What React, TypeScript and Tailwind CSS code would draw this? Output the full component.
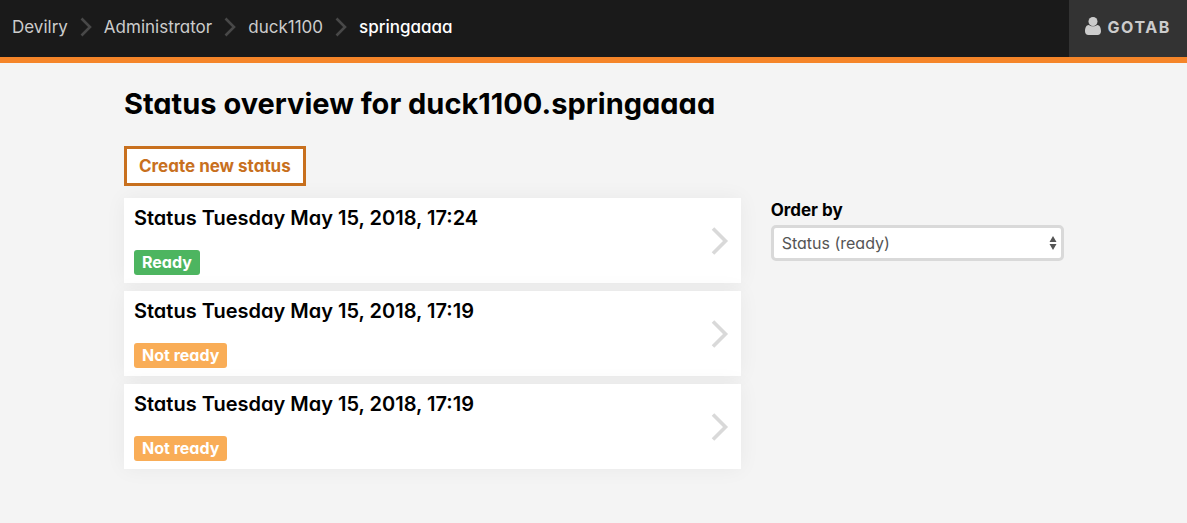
import React from "react";

type Status = { title: string; ready: boolean };

const crumbs = ["Devilry", "Administrator", "duck1100"];

const statuses: Status[] = [
  { title: "Status Tuesday May 15, 2018, 17:24", ready: true },
  { title: "Status Tuesday May 15, 2018, 17:19", ready: false },
  { title: "Status Tuesday May 15, 2018, 17:19", ready: false },
];

function CrumbSeparator() {
  return (
    <svg width="12" height="20" viewBox="0 0 12 20" fill="none" stroke="#484848" strokeWidth="2.6" aria-hidden="true">
      <path d="M1.500 1.500 10 10l-8.500 8.500" />
    </svg>
  );
}

function UserIcon() {
  return (
    <svg width="16" height="18" viewBox="0 0 16 18" fill="#cccccc" aria-hidden="true" className="mb-1">
      <path d="M3.800 8C1.200 8 0 11 0 14.300 0 16.500 1.400 18 3.400 18h9.200c2 0 3.400-1.500 3.400-3.700C16 11 14.800 8 12.200 8 11.100 8.900 9.700 9.300 8 9.300S4.900 8.900 3.800 8Z" />
      <circle cx="8" cy="4.500" r="4.500" />
    </svg>
  );
}

function StatusCard({ title, ready }: Status) {
  return (
    <li>
      <a href="#status" className="flex items-center justify-between bg-white py-2 pl-2.5 pr-3 shadow-[0_0_20px_rgba(0,0,0,0.05)]">
        <div>
          <h2 className="text-xl leading-6 font-semibold text-black">{title}</h2>
          <span
            className={`mt-5 inline-block rounded-[3px] px-2 text-base leading-[25px] font-bold text-white align-top ${
              ready ? "bg-[#4db560]" : "bg-[#f9ad57]"
            }`}
          >
            {ready ? "Ready" : "Not ready"}
          </span>
        </div>
        <svg width="18" height="28" viewBox="0 0 18 28" fill="none" stroke="#d9d9d9" strokeWidth="3.6" aria-hidden="true">
          <path d="M2 1.500 14.500 14 2 26.500" />
        </svg>
      </a>
    </li>
  );
}

export default function App() {
  return (
    <div className="min-h-screen bg-[#f4f4f4] font-['Inter','Lato',sans-serif] [font-feature-settings:'cv11']">
      <header className="flex items-stretch justify-between border-b-6 border-[#f58529] bg-[#1a1a1a]">
        <nav aria-label="Breadcrumb" className="flex items-center pl-3">
          <ol className="flex items-center gap-3 pb-[3px] text-[17px] leading-6 text-[#cccccc]">
            {crumbs.map((crumb) => (
              <li key={crumb} className="flex items-center gap-3">
                <a href="#crumb">{crumb}</a>
                <CrumbSeparator />
              </li>
            ))}
            <li className="font-medium text-white" aria-current="page">springaaaa</li>
          </ol>
        </nav>
        <button type="button" className="flex items-center gap-1.5 bg-[#333333] px-4 pt-[15px] pb-[17px] text-base leading-[25px] font-bold tracking-widest text-[#cccccc]">
          <UserIcon />
          GOTAB
        </button>
      </header>

      <main className="mx-auto max-w-[971px] pt-[23px] pr-[15px] pl-4">
        <h1 className="text-[29px] leading-9 font-bold text-black">
          Status overview for duck1100.springaaaa
        </h1>
        <a href="#create" className="mt-6 inline-block border-3 border-[#c8701e] bg-white px-3 py-[5px] align-top text-[17px] leading-6 font-bold text-[#c8701e]">
          Create new status
        </a>
        <div className="mt-3 grid grid-cols-12 gap-x-[30px]">
          <ul className="col-span-8 flex flex-col gap-2">
            {statuses.map((status, index) => (
              <StatusCard key={index} {...status} />
            ))}
          </ul>
          <form className="col-span-4">
            <label htmlFor="order-by" className="block text-[17px] leading-6 font-bold text-black">
              Order by
            </label>
            <div className="relative mt-[3px]">
              <select
                id="order-by"
                defaultValue="ready"
                className="block w-full appearance-none rounded-[5px] border-3 border-[#d9d9d9] bg-white py-[3px] pl-2 pr-6 text-base leading-6 text-[#555555]"
              >
                <option value="ready">Status (ready)</option>
              </select>
              <svg
                width="8"
                height="14"
                viewBox="0 0 8 14"
                fill="#555555"
                aria-hidden="true"
                className="pointer-events-none absolute inset-y-0 right-[7px] my-auto"
              >
                <path d="M4 0 7.500 6h-7ZM4 14 .5 8h7Z" />
              </svg>
            </div>
          </form>
        </div>
      </main>
    </div>
  );
}
